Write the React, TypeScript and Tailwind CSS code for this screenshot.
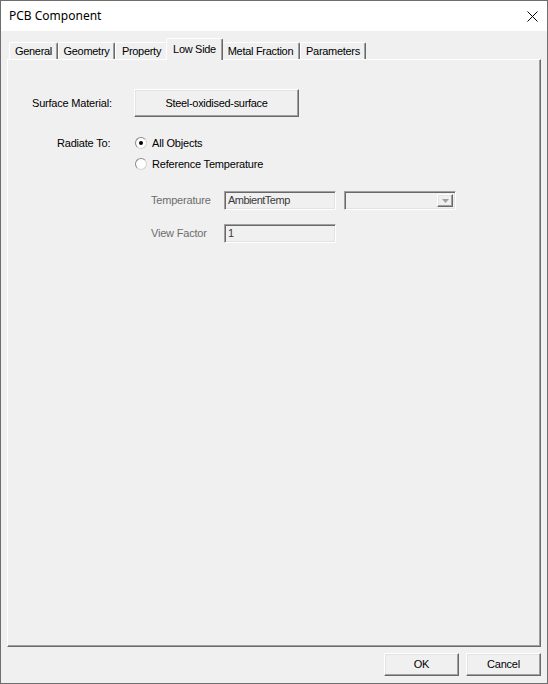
import React from "react";

const raised =
  "border border-t-white border-l-white border-r-[#696969] border-b-[#696969] shadow-[inset_-1px_-1px_0_#a0a0a0,inset_1px_1px_0_#e3e3e3]";
const sunken =
  "border border-t-[#a0a0a0] border-l-[#a0a0a0] border-r-white border-b-white shadow-[inset_1px_1px_0_#696969,inset_-1px_-1px_0_#e3e3e3]";

function Tab({ label, w, selected }: { label: string; w: string; selected?: boolean }) {
  if (selected) {
    return (
      <div
        className={`${w} -mx-[2px] -mb-[1px] h-[22px] relative z-10 bg-[#f0f0f0] border-t border-l border-r border-t-white border-l-white border-r-[#696969] shadow-[inset_-1px_0_0_#a0a0a0] rounded-t-[2px] flex items-start justify-center pt-[2px] text-black`}
      >
        {label}
      </div>
    );
  }
  return (
    <div
      className={`${w} h-[17px] bg-[#f0f0f0] border-t border-l border-r border-t-white border-l-white border-r-[#696969] shadow-[inset_-1px_0_0_#a0a0a0] rounded-t-[2px] flex items-center justify-center text-black`}
    >
      {label}
    </div>
  );
}

function Radio({ checked, label }: { checked?: boolean; label: string }) {
  return (
    <div className="h-[16px] flex items-center gap-[5px]">
      <div className="w-[12px] h-[12px] rounded-full border border-t-[#8a8a8a] border-l-[#8a8a8a] border-r-[#d4d4d4] border-b-[#d4d4d4] bg-white flex items-center justify-center">
        {checked && <div className="w-[4px] h-[4px] rounded-full bg-black" />}
      </div>
      <span>{label}</span>
    </div>
  );
}

export default function App() {
  return (
    <div className="w-[548px] h-[684px] border border-[#6e6e6e] bg-[#f0f0f0] flex flex-col font-['Liberation_Sans',Arial,sans-serif] text-[11px] tracking-[-0.2px] text-black overflow-hidden">
      {/* Title bar */}
      <div className="h-[30px] bg-white flex items-center justify-between shrink-0">
        <span className="pl-[8px] font-['Noto_Sans',sans-serif] text-[12px] tracking-normal text-black">
          PCB Component
        </span>
        <svg width="11" height="11" viewBox="0 0 11 11" className="mr-[9px]">
          <path d="M0.5 0.5 L10.5 10.5 M10.5 0.5 L0.5 10.5" stroke="#000" strokeWidth="1" />
        </svg>
      </div>

      {/* Body */}
      <div className="flex-1 flex flex-col pt-[7px]">
        {/* Tabs */}
        <div className="ml-[8px] h-[21px] flex items-end tracking-[-0.3px]">
          <Tab label="General" w="w-[49px]" />
          <Tab label="Geometry" w="w-[57px]" />
          <Tab label="Property" w="w-[53px]" />
          <Tab label="Low Side" w="w-[57px]" selected />
          <Tab label="Metal Fraction" w="w-[79px]" />
          <Tab label="Parameters" w="w-[66px]" />
        </div>

        {/* Panel */}
        <div className="ml-[6px] w-[534px] h-[588px] border border-t-white border-l-white border-r-[#696969] border-b-[#696969] shadow-[inset_-1px_-1px_0_#a0a0a0] flex flex-col">
          {/* Surface material */}
          <div className="mt-[29px] flex items-center">
            <span className="ml-[24px] w-[102px]">Surface Material:</span>
            <div className={`${raised} w-[165px] h-[28px] flex items-center justify-center tracking-[-0.3px]`}>
              Steel-oxidised-surface
            </div>
          </div>

          {/* Radiate to */}
          <div className="mt-[18px] flex items-start">
            <span className="ml-[49px] w-[78px] h-[16px] flex items-center">Radiate To:</span>
            <div className="flex flex-col gap-[5px]">
              <Radio checked label="All Objects" />
              <Radio label="Reference Temperature" />
            </div>
          </div>

          {/* Temperature */}
          <div className="mt-[19px] flex items-center">
            <span className="ml-[143px] w-[73px] text-[#6d6d6d]">Temperature</span>
            <div className={`${sunken} w-[112px] h-[19px] flex items-center pl-[3px] text-[#3a3a3a] tracking-[-0.5px]`}>
              AmbientTemp
            </div>
            <div className={`${sunken} ml-[8px] w-[112px] h-[19px] flex items-center justify-end p-[2px]`}>
              <div className={`${raised} w-[16px] h-full flex items-center justify-center`}>
                <svg width="7" height="4" viewBox="0 0 7 4">
                  <path d="M0 0 H7 L3.5 4 Z" fill="#a0a0a0" />
                </svg>
              </div>
            </div>
          </div>

          {/* View factor */}
          <div className="mt-[14px] flex items-center">
            <span className="ml-[143px] w-[73px] text-[#6d6d6d]">View Factor</span>
            <div className={`${sunken} w-[112px] h-[19px] flex items-center pl-[3px] text-[#3a3a3a]`}>
              1
            </div>
          </div>
        </div>

        {/* Bottom buttons */}
        <div className="mt-[6px] flex justify-end gap-[7px] pr-[6px]">
          <div className={`${raised} w-[75px] h-[23px] flex items-center justify-center`}>OK</div>
          <div className={`${raised} w-[75px] h-[23px] flex items-center justify-center`}>Cancel</div>
        </div>
      </div>
    </div>
  );
}
